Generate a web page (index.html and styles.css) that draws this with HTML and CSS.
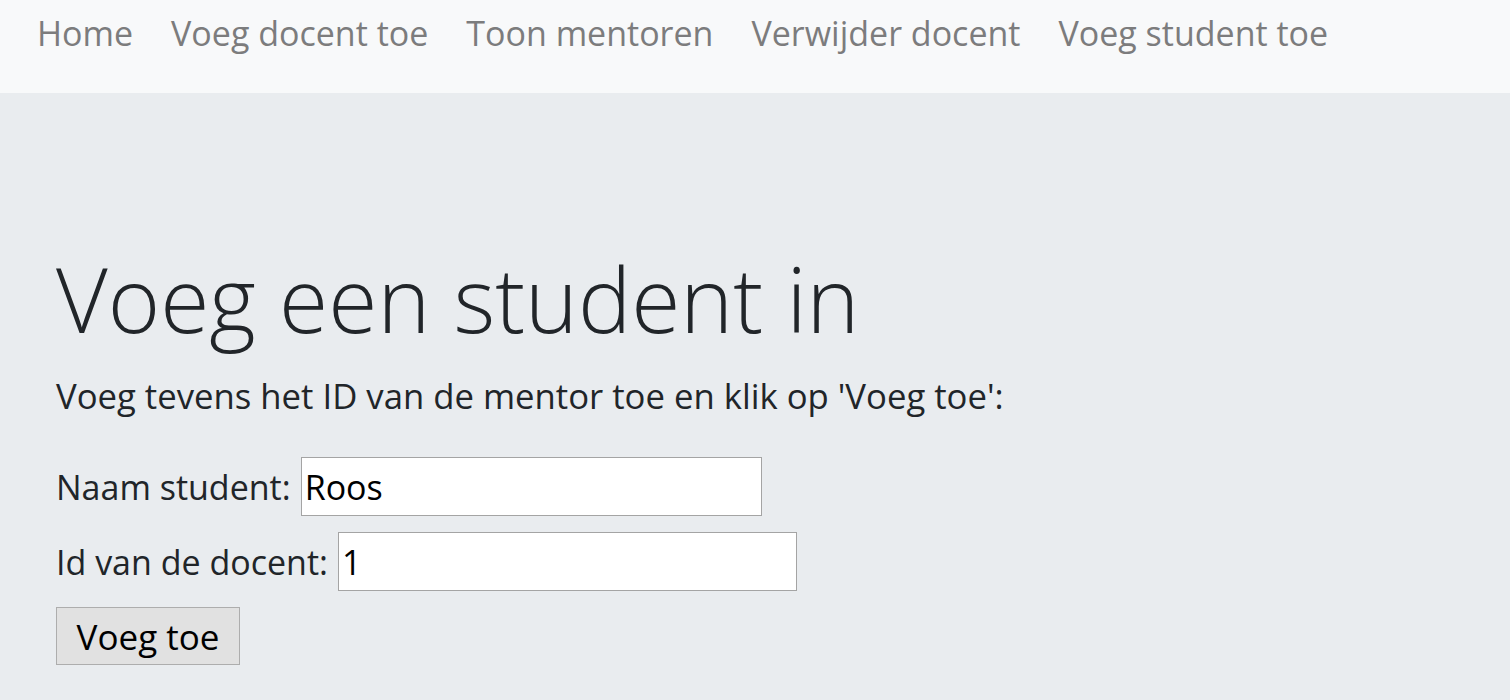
FILE: index.html
```html
<!DOCTYPE html>
<html lang="nl">
<head>
<meta charset="utf-8">
<title>Voeg student toe</title>
<link rel="stylesheet" href="styles.css">
</head>
<body>
<nav class="navbar">
  <a class="nav-link" href="#">Home</a>
  <a class="nav-link" href="#">Voeg docent toe</a>
  <a class="nav-link" href="#">Toon mentoren</a>
  <a class="nav-link" href="#">Verwijder docent</a>
  <a class="nav-link" href="#">Voeg student toe</a>
</nav>
<main class="jumbotron">
  <h1 class="title">Voeg een student in</h1>
  <p class="lead">Voeg tevens het ID van de mentor toe en klik op 'Voeg toe':</p>
  <form class="form">
    <div class="row">
      <label class="label" for="naam">Naam student:</label>
      <input class="input input-naam" id="naam" type="text" value="Roos">
    </div>
    <div class="row">
      <label class="label" for="docent">Id van de docent:</label>
      <input class="input input-id" id="docent" type="text" value="1">
    </div>
    <button class="button" type="button">Voeg toe</button>
  </form>
</main>
</body>
</html>
```
FILE: styles.css
```css
html, body {
  margin: 0;
  padding: 0;
}
body {
  font-family: "Open Sans", "Noto Sans", sans-serif;
  background: #e9ecef;
  color: #212529;
  height: 700px;
  overflow: hidden;
}
.navbar {
  background: #f8f9fa;
  height: 93px;
  box-sizing: border-box;
  padding: 10px 0 0 18px;
  display: flex;
  align-items: flex-start;
}
.nav-link {
  font-size: 34px;
  line-height: 46px;
  color: #7c7c7d;
  text-decoration: none;
  padding: 0 19px;
}
.jumbotron {
  padding: 0 56px;
}
.title {
  margin: 0;
  padding-top: 152px;
  font-size: 89.5px;
  font-weight: 300;
  line-height: 106px;
}
.lead {
  margin: 22px 0 0;
  font-size: 34.7px;
  line-height: 46px;
}
.form {
  margin-top: 38px;
}
.row {
  display: flex;
  align-items: baseline;
  gap: 10px;
  margin-bottom: 16px;
}
.label {
  font-size: 34px;
}
.input {
  box-sizing: border-box;
  height: 59px;
  font-family: inherit;
  font-size: 34px;
  color: #000;
  background: #fff;
  border: 1px solid #a4a4a4;
  padding: 0 3px;
  margin: 0;
  outline: none;
}
.input-naam {
  width: 461px;
}
.input-id {
  width: 459px;
}
.button {
  box-sizing: border-box;
  height: 58px;
  width: 184px;
  font-family: inherit;
  font-size: 35px;
  color: #000;
  background: #e1e1e1;
  border: 1px solid #adadad;
  padding: 0;
  margin: 0;
}
```
